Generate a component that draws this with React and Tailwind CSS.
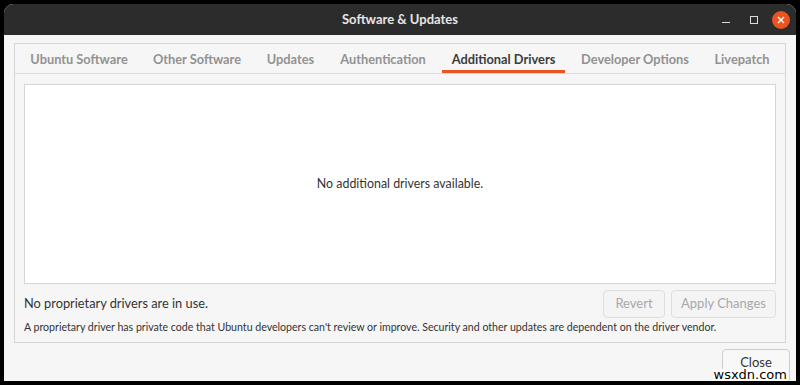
import React from "react";

const tabs = [
  ["Ubuntu Software", "w-[116px]"],
  ["Other Software", "w-[108px]"],
  ["Updates", "w-[67px]"],
  ["Authentication", "w-[106px]"],
  ["Additional Drivers", "w-[123px]"],
  ["Developer Options", "w-[128px]"],
  ["Livepatch", "w-[74px]"],
];

export default function App() {
  return (
    <div
      className="w-[800px] h-[385px] bg-black p-[4px] overflow-hidden"
      style={{ fontFamily: 'Lato, "Noto Sans", sans-serif' }}
    >
      <div className="w-full h-[377px] flex flex-col rounded-t-[9px] overflow-hidden bg-[#f6f6f6]">
        {/* Title bar */}
        <div className="relative h-[31px] bg-[#2c2c2c] flex items-center justify-center shrink-0">
          <span className="text-[13px] font-bold text-[#e6e6e6] whitespace-nowrap pt-[1px]">Software &amp; Updates</span>
          <div className="absolute right-[6px] top-0 h-full flex items-center">
            <div className="w-[8px] h-[1px] bg-[#dcdcdc] mt-[6px]" />
            <div className="w-[8px] h-[8px] border border-[#dcdcdc] ml-[20px]" />
            <div className="w-[18px] h-[18px] rounded-full bg-[#e95420] flex items-center justify-center ml-[14px]">
              <svg width="10" height="10" viewBox="0 0 10 10">
                <path d="M2 2L8 8M8 2L2 8" stroke="#fff" strokeWidth="1.4" />
              </svg>
            </div>
          </div>
        </div>
        {/* body */}
        <div className="flex-1 flex flex-col px-[10px] pt-[8px]">
          <div className="border border-[#d5d5d5] bg-[#f6f6f6] flex flex-col h-[300px]">
            <div className="h-[30px] flex items-stretch border-b border-[#dadada] pl-[6px] gap-[6px]">
              {tabs.map(([t, w]) => {
                const active = t === "Additional Drivers";
                return (
                  <div
                    key={t}
                    className={
                      w +
                      " flex items-center justify-center text-[12.8px] font-bold whitespace-nowrap border-b-[3px] pt-[5px] " +
                      (active ? "text-[#3c3c3c] border-[#e95420]" : "text-[#929292] border-transparent")
                    }
                  >
                    {t}
                  </div>
                );
              })}
            </div>
            <div className="flex-1 flex flex-col px-[9px] pt-[10px]">
              <div className="h-[200px] border border-[#d5d5d5] bg-white flex items-center justify-center">
                <span className="text-[12.4px] text-[#333] whitespace-nowrap">No additional drivers available.</span>
              </div>
              <div className="flex items-center justify-between mt-[6px]">
                <span className="text-[12.8px] text-[#333] whitespace-nowrap">No proprietary drivers are in use.</span>
                <div className="flex gap-[6px]">
                  <button className="h-[28px] w-[62px] rounded-[4px] border border-[#dedede] bg-[#f4f4f4] text-[13px] text-[#a8a8a8]">
                    Revert
                  </button>
                  <button className="h-[28px] w-[105px] rounded-[4px] border border-[#dedede] bg-[#f4f4f4] text-[13px] text-[#a8a8a8]">
                    Apply Changes
                  </button>
                </div>
              </div>
              <div className="text-[10.6px] text-[#333] mt-[2px] whitespace-nowrap">
                A proprietary driver has private code that Ubuntu developers can't review or improve. Security and other updates are dependent on the driver vendor.
              </div>
            </div>
          </div>
          <div className="flex justify-end mt-[6px] relative">
            <button className="h-[34px] w-[68px] rounded-[4px] border border-[#cdcdcd] bg-[#f8f8f8] text-[13px] text-[#333] mr-[-4px] pb-[6px]">
              Close
            </button>
            <span
              className="absolute right-[-2px] top-[20px] text-[13px] text-black bg-white px-[1px] leading-[12px]"
              style={{ fontFamily: '"DejaVu Sans", sans-serif' }}
            >
              wsxdn.com
            </span>
          </div>
        </div>
      </div>
    </div>
  );
}
